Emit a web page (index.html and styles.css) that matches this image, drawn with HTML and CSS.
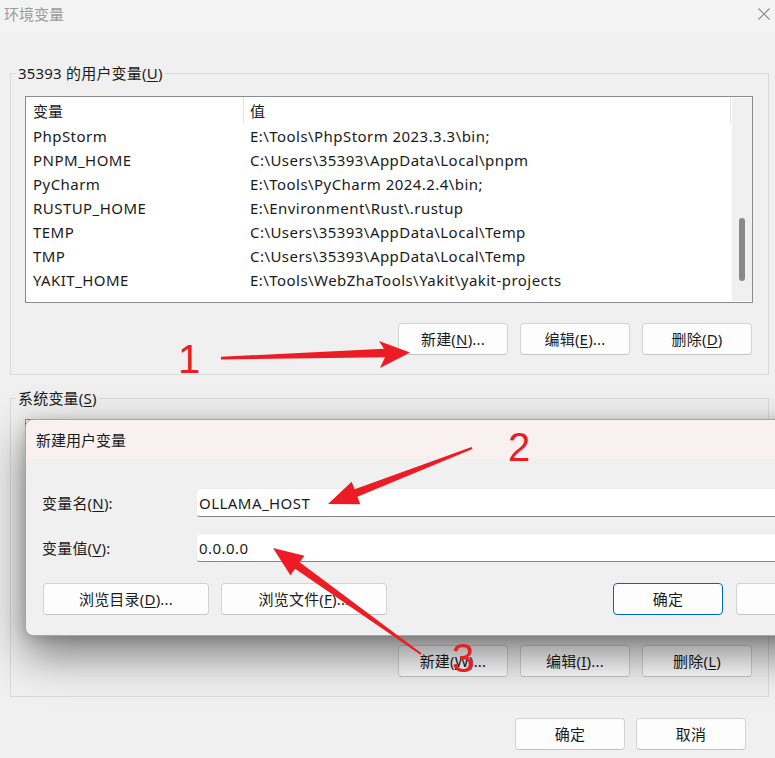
FILE: index.html
```html
<!DOCTYPE html>
<html lang="zh-CN">
<head>
<meta charset="utf-8">
<title>环境变量</title>
<link rel="stylesheet" href="styles.css">
</head>
<body>
<div class="window">
  <div class="titlebar">
    <span class="title">环境变量</span>
    <svg class="close" viewBox="0 0 12 12"><path d="M0.5 0.5 L11.5 11.5 M11.5 0.5 L0.5 11.5" stroke="#8a8a8a" stroke-width="1.1" fill="none"/></svg>
  </div>
  <div class="main">
    <fieldset class="group">
      <legend>35393 的用户变量(<u>U</u>)</legend>
      <div class="group-body group-body-user">
        <div class="list">
          <div class="list-body">
            <div class="list-row list-head"><div class="cell name">变量</div><div class="cell">值</div></div>
            <div class="list-row"><div class="cell name">PhpStorm</div><div class="cell">E:\Tools\PhpStorm 2023.3.3\bin;</div></div>
            <div class="list-row"><div class="cell name">PNPM_HOME</div><div class="cell">C:\Users\35393\AppData\Local\pnpm</div></div>
            <div class="list-row"><div class="cell name">PyCharm</div><div class="cell">E:\Tools\PyCharm 2024.2.4\bin;</div></div>
            <div class="list-row"><div class="cell name">RUSTUP_HOME</div><div class="cell">E:\Environment\Rust\.rustup</div></div>
            <div class="list-row"><div class="cell name">TEMP</div><div class="cell">C:\Users\35393\AppData\Local\Temp</div></div>
            <div class="list-row"><div class="cell name">TMP</div><div class="cell">C:\Users\35393\AppData\Local\Temp</div></div>
            <div class="list-row"><div class="cell name">YAKIT_HOME</div><div class="cell">E:\Tools\WebZhaTools\Yakit\yakit-projects</div></div>
          </div>
          <div class="scrollbar"><div class="thumb"></div></div>
        </div>
        <div class="btn-row">
          <button class="btn">新建(<u>N</u>)...</button>
          <button class="btn">编辑(<u>E</u>)...</button>
          <button class="btn">删除(<u>D</u>)</button>
        </div>
      </div>
    </fieldset>

    <fieldset class="group group-sys">
      <legend>系统变量(<u>S</u>)</legend>
      <div class="group-body group-body-sys">
        <div class="list">
          <div class="list-body">
            <div class="list-row list-head"><div class="cell name">变量</div><div class="cell">值</div></div>
          </div>
          <div class="scrollbar"><div class="thumb"></div></div>
        </div>
        <div class="btn-row btn-row-sys">
          <button class="btn">新建(<u>W</u>)...</button>
          <button class="btn">编辑(<u>I</u>)...</button>
          <button class="btn">删除(<u>L</u>)</button>
        </div>
      </div>
    </fieldset>

    <div class="footer">
      <button class="btn">确定</button>
      <button class="btn">取消</button>
    </div>
  </div>
</div>

<div class="dialog">
  <div class="dialog-title">新建用户变量</div>
  <div class="dialog-form">
    <div class="label">变量名(<u>N</u>):</div>
    <div class="field">OLLAMA_HOST</div>
    <div class="label">变量值(<u>V</u>):</div>
    <div class="field">0.0.0.0</div>
  </div>
  <div class="dialog-buttons">
    <button class="btn btn-wide">浏览目录(<u>D</u>)...</button>
    <button class="btn btn-wide">浏览文件(<u>F</u>)...</button>
    <button class="btn btn-primary">确定</button>
    <button class="btn btn-last">取消</button>
  </div>
</div>

<svg class="annotations" viewBox="0 0 775 758" width="775" height="758">
  <g fill="#ed1c24">
    <polygon points="221,356.8 384,348.8 379,341 410,352.5 380,368 385,357.2 221,359.6"/>
    <polygon points="471.6,447.1 354.6,489.3 351.7,481.8 328,504 360.3,504.2 357.4,496.7 472.4,448.9"/>
    <polygon points="421.6,653.2 299.7,562.2 304.4,555.7 273,548 290.4,575.3 295.1,568.8 420.4,654.8"/>
    <text x="178" y="373" class="num">1</text>
    <text x="508" y="461" class="num">2</text>
    <text x="452" y="672" class="num">3</text>
  </g>
</svg>
</body>
</html>
```
FILE: styles.css
```css
* { box-sizing: border-box; }
html, body { margin: 0; padding: 0; }
body {
  width: 775px;
  height: 758px;
  overflow: hidden;
  position: relative;
  background: #f0f0f0;
  font-family: "Noto Sans", "Noto Sans CJK SC", sans-serif;
  font-size: 15px;
  line-height: 20px;
  letter-spacing: 0.45px;
  color: #1a1a1a;
}
u { text-underline-offset: 2px; text-decoration-thickness: 1px; }

.titlebar {
  height: 32px;
  background: #f3f3f3;
  display: flex;
  align-items: center;
  justify-content: space-between;
  padding: 0 5px 4px 4px;
}
.title { color: #9b9b9b; letter-spacing: 0; }
.close { width: 12px; height: 12px; display: block; }

.main { padding: 31px 6px 0 10px; }

.group {
  margin: 0;
  padding: 0;
  border: 1px solid #dadada;
  min-width: 0;
}
.group legend { padding: 0 2px; margin-left: 5px; line-height: 20px; letter-spacing: 0.2px; }
.group-sys { margin-top: 13px; }

.group-body-user { padding: 13px 15px 19px 14px; }
.group-body-sys { padding: 11px 15px 19px 14px; }

.list {
  height: 207px;
  background: #fff;
  border: 1px solid #878b92;
  display: flex;
}
.list-body { flex: 1; min-width: 0; }
.list-row {
  display: grid;
  grid-template-columns: 218px 1fr;
  height: 24px;
  align-items: center;
}
.list-head { height: 27px; grid-template-columns: 218px 487px; align-items: stretch; }
.list-head .cell { border-right: 1px solid #e5e5e5; display: flex; align-items: center; letter-spacing: 0; }
.cell { padding-left: 6px; white-space: nowrap; overflow: hidden; }
.cell.name { padding-left: 7px; }

.scrollbar {
  width: 20px;
  background: #f0f0f0;
  margin: 1px 0;
  padding: 120px 7px 0;
}
.thumb { height: 63px; background: #8a8a8a; border-radius: 3px; }

.btn-row {
  display: flex;
  justify-content: flex-end;
  gap: 12px;
  margin-top: 20px;
  padding-right: 1px;
}
.btn-row-sys { margin-top: 19px; }

.btn {
  width: 110px;
  height: 32px;
  padding: 0;
  margin: 0;
  background: #fdfdfd;
  border: 1px solid #d3d3d3;
  border-bottom-color: #c4c4c4;
  border-radius: 4px;
  font: inherit;
  letter-spacing: 0.2px;
  color: #1a1a1a;
  display: flex;
  align-items: center;
  justify-content: center;
}

.footer {
  display: flex;
  justify-content: flex-end;
  gap: 11px;
  padding: 21px 23px 0 0;
}

.dialog {
  position: absolute;
  left: 25px;
  top: 419px;
  width: 839px;
  background: #f0f0f0;
  border: 1px solid #a6a6a6;
  border-radius: 8px;
  overflow: hidden;
  box-shadow: 0 18px 44px rgba(0, 0, 0, 0.5), 0 2px 12px rgba(0, 0, 0, 0.15);
  z-index: 5;
}
.dialog-title {
  height: 39px;
  background: #f9f0f0;
  padding-left: 10px;
  display: flex;
  align-items: center;
  letter-spacing: 0;
}
.dialog-form {
  display: grid;
  grid-template-columns: 154px 1fr;
  row-gap: 16px;
  align-items: center;
  padding: 29px 17px 0 16px;
}
.label { letter-spacing: 0.2px; }
.field {
  height: 29px;
  background: #fff;
  border: 1px solid #ececec;
  border-bottom-color: #868686;
  border-radius: 4px;
  padding-left: 2px;
  display: flex;
  align-items: center;
}
.dialog-buttons {
  display: flex;
  gap: 12px;
  padding: 21px 17px 20px 17px;
}
.btn-wide { width: 166px; }
.btn-primary { margin-left: auto; border-color: #0067c0; }
.btn-last { margin-left: 1px; }

.annotations {
  position: absolute;
  left: 0;
  top: 0;
  z-index: 10;
  pointer-events: none;
  letter-spacing: 0;
}
.num { font-family: "Liberation Sans", sans-serif; font-size: 40px; }
```
